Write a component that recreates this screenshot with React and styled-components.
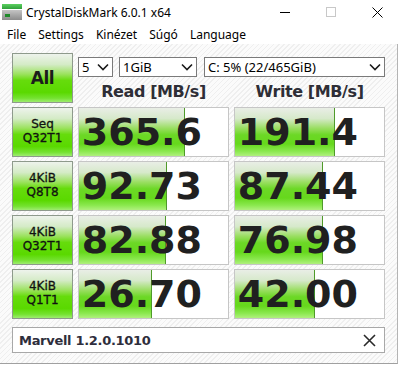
import React from "react";
import styled, { createGlobalStyle } from "styled-components";

const Global = createGlobalStyle`
  html, body { margin: 0; padding: 0; background: #ffffff; }
  body { width: 400px; height: 366px; overflow: hidden; }
`;

const Window = styled.div`
  width: 400px;
  height: 366px;
  display: flex;
  flex-direction: column;
  background: #ffffff;
  font-family: "Noto Sans", "Open Sans", sans-serif;
`;

const TitleBar = styled.div`
  height: 24px;
  display: flex;
  align-items: center;
  padding-left: 2px;
`;

const TitleText = styled.span`
  margin-left: 4px;
  font-size: 12px;
  color: #000;
  flex: 1;
  margin-top: 1px;
`;

const Controls = styled.div`
  display: flex;
  height: 24px;
`;

const CtrlBtn = styled.div`
  width: 46px;
  height: 24px;
  display: flex;
  align-items: center;
  justify-content: center;
`;

const MenuBar = styled.div`
  height: 20px;
  display: flex;
  align-items: center;
`;

const MenuItem = styled.span`
  font-size: 12px;
  color: #000;
  padding: 0 6px 0 ${(p) => p.$padl || 6}px;
`;

const Content = styled.div`
  flex: 1;
  width: 398px;
  box-sizing: border-box;
  border-right: 1px solid #b4b4b4;
  border-bottom: 1px solid #a0a0a0;
  margin-bottom: 2px;
  padding: 9px 0 0 12px;
  background: repeating-linear-gradient(
    135deg,
    #fbfbfb 0px,
    #fbfbfb 2.5px,
    #efefef 2.5px,
    #efefef 3.6px
  );
  display: grid;
  grid-template-columns: 61px 151px 151px;
  grid-template-rows: 50px 50px 50px 50px 50px 30px;
  column-gap: 5px;
  row-gap: 4px;
  align-content: start;
`;

const greenGrad = `linear-gradient(
  to bottom,
  #eef3ec 0%,
  #d4ebc6 22%,
  #9be25e 42%,
  #66dc0c 55%,
  #5ad900 80%,
  #74e230 92%,
  #9eec70 100%
)`;

const GreenButton = styled.div`
  box-sizing: border-box;
  border: 1px solid #8e9a8c;
  background: ${greenGrad};
  display: flex;
  flex-direction: column;
  align-items: center;
  justify-content: center;
  color: ${(p) => (p.$big ? "#1c1c1c" : "#111")};
  font-family: "DejaVu Sans", sans-serif;
  font-size: ${(p) => (p.$big ? "17px" : "12px")};
  font-weight: ${(p) => (p.$big ? 700 : 400)};
  line-height: ${(p) => (p.$big ? "20px" : "14px")};
  letter-spacing: ${(p) => (p.$big ? "-0.5px" : "0")};
  padding-bottom: ${(p) => (p.$big ? "0" : "3px")};
  -webkit-text-stroke: ${(p) => (p.$big ? "0" : "0.3px #111")};
`;

const TopRight = styled.div`
  grid-column: 2 / 4;
  display: grid;
  grid-template-columns: 151px 151px;
  column-gap: 5px;
  grid-template-rows: 20px 1fr;
  padding-top: 4px;
`;

const SelectRow = styled.div`
  grid-column: 1 / 3;
  display: flex;
  gap: 6px;
`;

const Select = styled.div`
  box-sizing: border-box;
  width: ${(p) => p.$w}px;
  margin-left: ${(p) => p.$ml || 0}px;
  height: 20px;
  border: 1px solid #7a7a7a;
  background: #ffffff;
  display: flex;
  align-items: center;
  justify-content: space-between;
  padding: 0 3px 0 3px;
  font-size: 13px;
  color: #000;
`;

const SelText = styled.span`
  line-height: 18px;
`;

const Header = styled.div`
  display: flex;
  align-items: center;
  justify-content: center;
  font-family: "DejaVu Sans", sans-serif;
  font-weight: 700;
  font-size: 16px;
  letter-spacing: -0.4px;
  color: #2e2e36;
  padding-top: 2px;
`;

const ValueCell = styled.div`
  position: relative;
  box-sizing: border-box;
  border: 1px solid #c6c6c6;
  background: #ffffff;
  overflow: hidden;
`;

const Bar = styled.div`
  position: absolute;
  left: 0;
  top: 0;
  bottom: 0;
  background: linear-gradient(
    to bottom,
    #e9eee6 0%,
    #d6e9ca 22%,
    #9ade62 42%,
    #6cd826 56%,
    #66d81c 75%,
    #8ae84e 90%,
    #b0f07e 100%
  );
  border-right: 1px solid #4f9a2a;
`;

const Value = styled.div`
  position: relative;
  height: 100%;
  display: flex;
  align-items: center;
  justify-content: flex-end;
  padding-right: 26px;
  font-family: "DejaVu Sans", sans-serif;
  font-weight: 700;
  font-size: 38px;
  color: #202020;
  padding-bottom: 1px;
  box-sizing: border-box;
`;

const CommentBar = styled.div`
  grid-column: 1 / 4;
  margin-top: 4px;
  box-sizing: border-box;
  border: 1px solid #a8a8a8;
  background: #ffffff;
  display: flex;
  align-items: center;
  justify-content: space-between;
  padding: 0 8px 0 6px;
  font-family: "DejaVu Sans", sans-serif;
  font-weight: 700;
  font-size: 13px;
  letter-spacing: -0.3px;
  color: #2e2e3c;
`;

const Chevron = () => (
  <svg width="12" height="8" viewBox="0 0 12 8">
    <path d="M1 1.5 L6 6.5 L11 1.5" fill="none" stroke="#1a1a1a" strokeWidth="1.6" />
  </svg>
);

const AppIcon = () => (
  <svg width="20" height="17" viewBox="0 0 20 17">
    <defs>
      <linearGradient id="gt" x1="0" y1="0" x2="0" y2="1">
        <stop offset="0" stopColor="#5cd060" />
        <stop offset="1" stopColor="#2f9e3a" />
      </linearGradient>
      <linearGradient id="gb" x1="0" y1="0" x2="0" y2="1">
        <stop offset="0" stopColor="#c4c4c4" />
        <stop offset="1" stopColor="#8c8c8c" />
      </linearGradient>
    </defs>
    <rect x="0" y="0" width="20" height="5" fill="url(#gt)" />
    <rect x="0" y="6" width="20" height="10" fill="url(#gb)" />
    <rect x="3" y="10" width="5" height="3" fill="#1f8a2a" />
  </svg>
);

const rows = [
  { l1: "Seq", l2: "Q32T1", r: "365.6", w: "191.4", rb: 105, wb: 99 },
  { l1: "4KiB", l2: "Q8T8", r: "92.73", w: "87.44", rb: 87, wb: 87 },
  { l1: "4KiB", l2: "Q32T1", r: "82.88", w: "76.98", rb: 86, wb: 87 },
  { l1: "4KiB", l2: "Q1T1", r: "26.70", w: "42.00", rb: 72, wb: 79 },
];

export default function App() {
  return (
    <>
      <Global />
      <Window>
        <TitleBar>
          <AppIcon />
          <TitleText>CrystalDiskMark 6.0.1 x64</TitleText>
          <Controls>
            <CtrlBtn>
              <svg width="10" height="10" viewBox="0 0 10 10">
                <path d="M0 5.5 H10" stroke="#000" strokeWidth="1" />
              </svg>
            </CtrlBtn>
            <CtrlBtn>
              <svg width="10" height="10" viewBox="0 0 10 10">
                <rect x="0.5" y="0.5" width="9" height="9" fill="none" stroke="#c8c8c8" strokeWidth="1" />
              </svg>
            </CtrlBtn>
            <CtrlBtn>
              <svg width="11" height="11" viewBox="0 0 11 11">
                <path d="M0.5 0.5 L10.5 10.5 M10.5 0.5 L0.5 10.5" stroke="#000" strokeWidth="1" />
              </svg>
            </CtrlBtn>
          </Controls>
        </TitleBar>
        <MenuBar>
          <MenuItem $padl={7}>File</MenuItem>
          <MenuItem>Settings</MenuItem>
          <MenuItem>Kinézet</MenuItem>
          <MenuItem>Súgó</MenuItem>
          <MenuItem>Language</MenuItem>
        </MenuBar>
        <Content>
          <GreenButton $big>All</GreenButton>
          <TopRight>
            <SelectRow>
              <Select $w={35}>
                <SelText>5</SelText>
                <Chevron />
              </Select>
              <Select $w={78}>
                <SelText>1GiB</SelText>
                <Chevron />
              </Select>
              <Select $w={181} $ml={1}>
                <SelText>C: 5% (22/465GiB)</SelText>
                <Chevron />
              </Select>
            </SelectRow>
            <Header>Read [MB/s]</Header>
            <Header>Write [MB/s]</Header>
          </TopRight>
          {rows.map((r, i) => (
            <React.Fragment key={i}>
              <GreenButton>
                <span>{r.l1}</span>
                <span>{r.l2}</span>
              </GreenButton>
              <ValueCell>
                <Bar style={{ width: r.rb }} />
                <Value>{r.r}</Value>
              </ValueCell>
              <ValueCell>
                <Bar style={{ width: r.wb }} />
                <Value>{r.w}</Value>
              </ValueCell>
            </React.Fragment>
          ))}
          <CommentBar>
            <span>Marvell 1.2.0.1010</span>
            <svg width="13" height="13" viewBox="0 0 13 13">
              <path d="M1 1 L12 12 M12 1 L1 12" stroke="#2a2a2a" strokeWidth="1.6" />
            </svg>
          </CommentBar>
        </Content>
      </Window>
    </>
  );
}
